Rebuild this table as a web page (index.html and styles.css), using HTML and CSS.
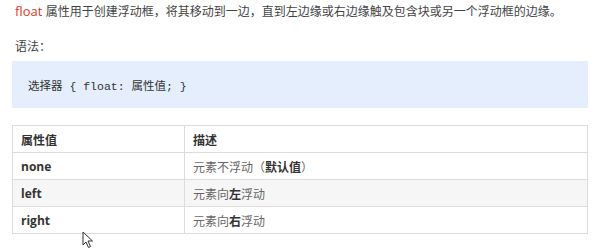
FILE: index.html
```html
<!DOCTYPE html>
<html lang="zh">
<head>
<meta charset="utf-8">
<link rel="stylesheet" href="styles.css">
</head>
<body>
<div class="page">
  <p class="intro"><span class="kw">float</span> 属性用于创建浮动框，将其移动到一边，直到左边缘或右边缘触及包含块或另一个浮动框的边缘。</p>
  <p class="label">语法：</p>
  <div class="code">选择器 { float: 属性值; }</div>
  <table class="props">
    <thead>
      <tr><th class="c1">属性值</th><th>描述</th></tr>
    </thead>
    <tbody>
      <tr><td class="c1 b">none</td><td>元素不浮动（<b>默认值</b>）</td></tr>
      <tr class="alt"><td class="c1 b">left</td><td>元素向<b>左</b>浮动</td></tr>
      <tr><td class="c1 b">right</td><td>元素向<b>右</b>浮动</td></tr>
    </tbody>
  </table>
  <svg class="cursor" width="12" height="18" viewBox="0 0 12 18"><path d="M1 1 L1 14 L4 11 L6.5 16.5 L8.5 15.5 L6 10 L10.5 10 Z" fill="#fff" stroke="#333" stroke-width="1" stroke-linejoin="round"/></svg>
</div>
</body>
</html>
```
FILE: styles.css
```css
html, body { margin: 0; padding: 0; background: #fff; }
.page {
  position: relative;
  width: 576px;
  min-height: 250px;
  padding: 0 0 0 12px;
  font-family: "Liberation Sans", "Noto Sans CJK SC", sans-serif;
  color: #444;
  font-size: 12px;
}
.intro { margin: 0; padding: 3px 0 0 3px; line-height: 17px; white-space: nowrap; }
.kw { color: #d83a22; font-family: "Open Sans", "Noto Sans CJK SC", sans-serif; font-size: 13px; }
.label { margin: 18px 0 0 3px; line-height: 17px; }
.code {
  margin-top: 5px;
  height: 47px;
  background: #e4eefc;
  display: flex;
  align-items: center;
  padding-left: 16px;
  font-family: "Liberation Mono", "Noto Sans CJK SC", monospace;
  font-size: 11.5px;
  color: #333;
  white-space: pre;
}
.props {
  margin-top: 17px;
  width: 576px;
  border-collapse: collapse;
  border: 1px solid #dcdcdc;
  font-size: 12px;
}
.props th, .props td {
  border: 1px solid #dcdcdc;
  height: 26px;
  padding: 0 8px;
  text-align: left;
  color: #666;
}
.props th { font-weight: bold; color: #333; }
.props .c1 { width: 155px; }
.props td.b { font-weight: bold; color: #333; font-family: "Open Sans", "Noto Sans CJK SC", sans-serif; }
.props b { color: #333; }
.props tr.alt td { background: #f6f6f6; }
.cursor { position: absolute; left: 82px; top: 231px; }
```
